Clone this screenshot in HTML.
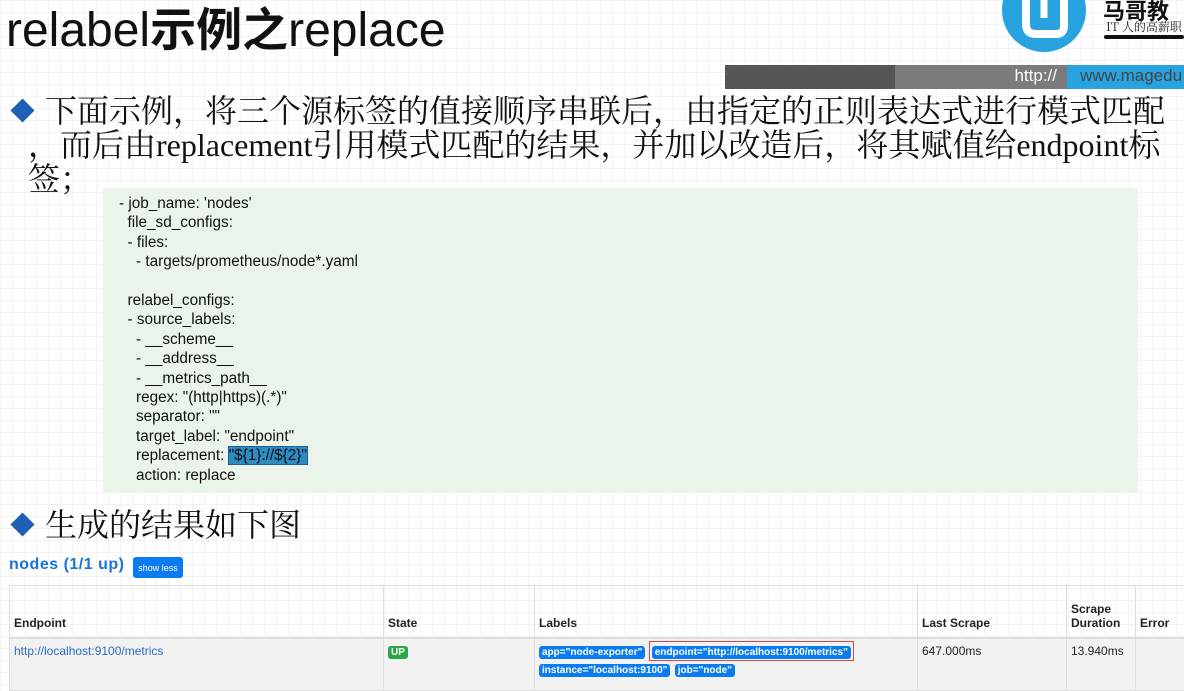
<!DOCTYPE html>
<html><head><meta charset="utf-8"><style>
body{margin:0;width:1184px;height:690px;overflow:hidden;background:#fff;position:relative;font-family:"Liberation Sans","Noto Sans CJK SC",sans-serif;
background-image:linear-gradient(#f3f3f3 1px,transparent 1px),linear-gradient(90deg,#f3f3f3 1px,transparent 1px);background-size:12px 12px}
.abs{position:absolute}
.title{left:6px;top:-6px;font-size:48px;color:#111;white-space:nowrap}
.bar1{left:725px;top:65px;width:170px;height:24px;background:#555}
.bar2{left:895px;top:65px;width:172px;height:24px;background:#7b7b7b;color:#fff;font-size:17px;text-align:right;box-sizing:border-box;padding:1px 10px 0 0}
.bar3{left:1067px;top:65px;width:117px;height:24px;background:#29a3df;color:#444;font-size:17px;padding:1px 0 0 13px;box-sizing:border-box;white-space:nowrap;overflow:hidden}
.txt{font-family:"Liberation Serif","Noto Serif CJK SC",serif;font-size:32px;color:#111;white-space:nowrap;line-height:34px}
.dia{width:17px;height:17px;background:#1f5fb3;transform:rotate(45deg)}
.code{left:103px;top:188px;width:1035px;height:304px;background:#eaf4ea}
.code pre{margin:0;position:absolute;left:16px;top:6px;font-family:"Liberation Sans",sans-serif;font-size:15.3px;line-height:19.4px;color:#111}
.hl{background:#2d8cc4;color:#111;outline:1px solid #1a5f90}
table{border-collapse:collapse;font-size:12px;color:#222}
td,th{border:1px solid #ddd;text-align:left;vertical-align:bottom;padding:4px 4px}
th{font-weight:bold;height:40px;padding-bottom:7px;border-bottom:2px solid #ddd}
tr.r td{background:#f2f2f2;vertical-align:top;height:42px;padding-top:5px}
.lb{display:inline-block;background:#0a7cf0;color:#fff;font-weight:bold;font-size:10px;padding:1px 3px;border-radius:3px;margin:0 1px 3px 0}
</style></head><body>
<div class="abs title">relabel<span style="font-family:'Noto Sans CJK SC',sans-serif;font-weight:bold;font-size:46px">示例之</span>replace</div>
<svg class="abs" style="left:1000px;top:-10px" width="90" height="66" viewBox="0 0 90 66"><circle cx="44" cy="20" r="42" fill="#29a3df"/><path d="M26 2 V34 Q26 44 36 44 H56 Q64 44 64 36 V2" stroke="#fff" stroke-width="8" fill="none"/><path d="M44 2 V28" stroke="#fff" stroke-width="7"/></svg>
<div class="abs" style="left:1106px;top:18px;font-size:12px;color:#222;font-family:'Noto Serif CJK SC',serif;white-space:nowrap">IT 人的高薪职</div>
<div class="abs" style="left:1103px;top:-6px;font-size:22px;font-weight:bold;color:#111;font-family:'Noto Sans CJK SC',sans-serif;white-space:nowrap">马哥教</div>
<div class="abs" style="left:1104px;top:35px;width:80px;height:4px;background:#111;border-radius:2px"></div>
<div class="abs bar1"></div><div class="abs bar2">http://</div><div class="abs bar3">www.magedu</div>
<div class="abs dia" style="left:14px;top:102px"></div>
<div class="abs txt" style="left:45px;top:94px">下面示例，将三个源标签的值接顺序串联后，由指定的正则表达式进行模式匹配</div>
<div class="abs txt" style="left:28px;top:128px">，而后由replacement引用模式匹配的结果，并加以改造后，将其赋值给endpoint标</div>
<div class="abs txt" style="left:28px;top:162px">签；</div>
<div class="abs code"><pre>- job_name: 'nodes'
  file_sd_configs:
  - files:
    - targets/prometheus/node*.yaml

  relabel_configs:
  - source_labels:
    - __scheme__
    - __address__
    - __metrics_path__
    regex: "(http|https)(.*)"
    separator: ""
    target_label: "endpoint"
    replacement: <span class="hl">"${1}://${2}"</span>
    action: replace</pre></div>
<div class="abs dia" style="left:14px;top:516px"></div>
<div class="abs txt" style="left:45px;top:508px">生成的结果如下图</div>
<div class="abs" style="left:9px;top:556px;font-size:16px;font-weight:bold;color:#1a73d9;letter-spacing:0.5px">nodes (1/1 up)</div>
<div class="abs" style="left:133px;top:557px;width:50px;height:21px;background:#0a7cf0;border-radius:3px;color:#fff;font-size:9px;text-align:center;line-height:22px">show less</div>
<table class="abs" style="left:9px;top:585px;width:1180px">
<tr><th style="width:365px">Endpoint</th><th style="width:142px">State</th><th style="width:374px">Labels</th><th style="width:140px">Last Scrape</th><th style="width:60px">Scrape Duration</th><th>Error</th></tr>
<tr class="r"><td style="color:#2a6cc0">http://localhost:9100/metrics</td><td><span class="lb" style="background:#28a745">UP</span></td>
<td style="padding-top:5px"><span class="lb">app="node-exporter"</span> <span style="outline:1px solid #d44;padding:2px 2px"><span class="lb" style="margin:0">endpoint="http://localhost:9100/metrics"</span></span><br><span class="lb">instance="localhost:9100"</span> <span class="lb">job="node"</span></td>
<td>647.000ms</td><td>13.940ms</td><td></td></tr>
</table>
</body></html>
